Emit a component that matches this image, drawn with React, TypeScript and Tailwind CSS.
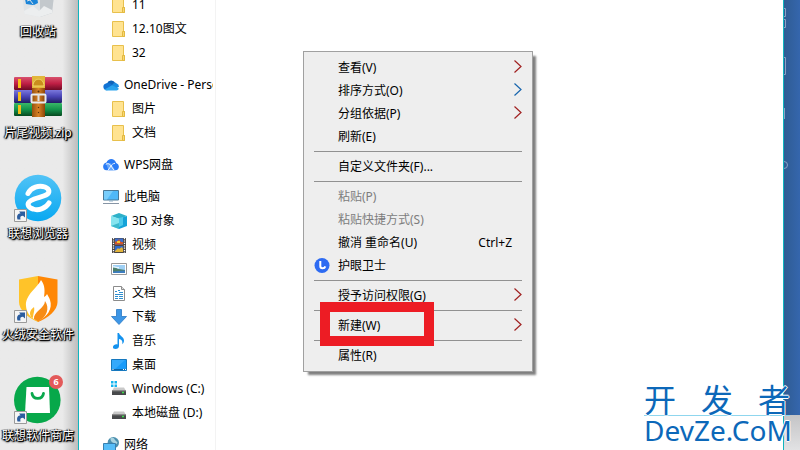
import type { ReactNode } from "react";

const shadow =
  "[text-shadow:1px_1px_0_#000,1px_1px_2px_#000,0_1px_2px_#000,1px_0_1px_#000,-1px_0_1px_#000]";

function FolderIcon() {
  return (
    <svg className="h-4 w-4" viewBox="0 0 16 16">
      <path d="M1.500.5h11V10l1 .5V15.500h-12z" fill="#ffe391" stroke="#e8c04c" />
      <path d="M11.500 15.500v-5h2v5z" fill="#f7d774" stroke="#e3b93f" />
    </svg>
  );
}

function OneDriveIcon() {
  return (
    <svg className="h-4 w-4" viewBox="0 0 16 16">
      <path d="M4 6.500A4.500 4.500 0 0 1 12.300 6L9 10z" fill="#0f62b8" />
      <path d="M3.500 13.200A3.400 3.400 0 0 1 3 6.500c1.500-.8 3.500-.5 5 .5l5 5z" fill="#1173d4" />
      <path d="M9 8.500c1-2.600 3-3.300 4.300-2.300A3.600 3.600 0 0 1 16 9.800L12 12z" fill="#1b8ce0" />
      <path d="M1.500 12.500 9 8.300l6.800 3.200c-.2 1-1 1.900-2.300 1.900h-10c-.8 0-1.500-.3-2-.9z" fill="#2aa4ee" />
    </svg>
  );
}

function WpsIcon() {
  return (
    <svg className="h-4 w-4" viewBox="0 0 16 16">
      <path d="M3.500 5.500C5 1 11.500.5 13.200 6c4 1.500 3.300 7.300-.7 7.300h-9C-1 13-1 6.500 3.500 5.500z" fill="#2b7cf6" />
      <path d="M8 6.500 12 13.300H5.500L3 6z" fill="#69a8fb" />
      <path d="M2.800 7.300c3-1.500 4 0 5.200 1.700l3 4.300M5 13.300l3-4.300c1-1.500 2-2.500 4-2.700" stroke="#fff" strokeWidth=".9" fill="none" />
    </svg>
  );
}

function PcIcon() {
  return (
    <svg className="h-4 w-4" viewBox="0 0 16 16">
      <path d="M.5 1.500h15v9.500H.5z" fill="#4fb8f8" stroke="#4a7896" />
      <path d="M1 2h9L4 10.500H1z" fill="#78cdfb" />
      <path d="M6 11.500h4v1H6z" fill="#8fb0c8" />
      <path d="M0 14.500h16" stroke="#8795a5" />
    </svg>
  );
}

function CubeIcon() {
  return (
    <svg className="h-4 w-4" viewBox="0 0 16 16">
      <path d="m0 3 8-3 8 3-8 3z" fill="#2eb1c9" />
      <path d="m0 3 8 2.500V16l-8-3z" fill="#86e4ef" />
      <path d="m16 3-8 2.500V16l8-3z" fill="#14a3d8" />
      <path d="m0 13 8-3v6z" fill="#3db9cd" />
      <path d="m8 5 4-1v8l-4 2z" fill="#4cc9ea" />
    </svg>
  );
}

function VideoIcon() {
  return (
    <svg className="h-4 w-4" viewBox="0 0 16 16">
      <path d="M1 1h14v15H1z" fill="#4a4542" />
      <path d="M4 1.500h8v6H4z" fill="#3a6fd0" />
      <path d="M4 4.500h2L8 2l2 3h2v2.500H4z" fill="#d2552a" />
      <path d="M6 4h3v2H6z" fill="#f3c832" />
      <path d="M4 9h8v6H4z" fill="#2d69cd" />
      <path d="m4 14 3-3 1 1 3-2 1 2v3H4z" fill="#e2b43a" />
      <path d="M2.500 1v15M13.500 1v15" stroke="#fff" strokeWidth="1.300" strokeDasharray="1.200 1.200" />
    </svg>
  );
}

function PictureIcon() {
  return (
    <svg className="h-4 w-4" viewBox="0 0 16 16">
      <path d="M.5 2.500h15v11H.5z" fill="#fff" stroke="#999" />
      <path d="M2 4h12v8H2z" fill="#9fd0f5" />
      <path d="M2 6c3 0 4 2 6 2s4 1 6 1v3H2z" fill="#4e7f6b" />
      <path d="M2 10.500 14 9.500V12H2z" fill="#3d7dbf" />
      <path d="M2 5.500c2-1 4 1 6 .5v1.500c-2 0-3-1-6-1z" fill="#e8f5ff" />
    </svg>
  );
}

function DocIcon() {
  return (
    <svg className="h-4 w-4" viewBox="0 0 16 16">
      <path d="M2.500 1.500h8l3 3v11h-11z" fill="#fff" stroke="#8c8c8c" />
      <path d="M10.500 1.500v3h3" fill="#ddd" stroke="#8c8c8c" />
      <path d="M4 6.500h2M7 5.500h2M8 7.500h4M4 9.500h8M4 11.500h3M8 11.500h4M4 13.500h3M8 13.500h4" stroke="#2f8fd0" />
    </svg>
  );
}

function DownloadIcon() {
  return (
    <svg className="h-4 w-4" viewBox="0 0 16 16">
      <path d="M5.500.5h5v7h5L8 15.500.5 7.500h5z" fill="#3d96e6" stroke="#2878c4" strokeWidth=".8" />
    </svg>
  );
}

function MusicIcon() {
  return (
    <svg className="h-4 w-4" viewBox="0 0 16 16">
      <path d="M6.500 0H8c.5 3 5.500 4 5 8-.2 1.500-.8 2.500-1.800 3.200C12 8 10.500 6.500 8 6v7c0 1.800-1.500 3-3.500 3S1.800 15 2 13.700C2.300 12 4.500 11 6.500 11.500z" fill="#1492ee" />
    </svg>
  );
}

function DesktopIcon() {
  return (
    <svg className="h-4 w-4" viewBox="0 0 16 16">
      <path d="M.5 2.500h15v11H.5z" fill="#189bfa" stroke="#1678be" />
      <path d="M1 3h13L4 12H1z" fill="#35a9fb" />
      <path d="M1 12.500h14" stroke="#0d65a8" />
      <path d="M1.500 12.500h1M12 12.500h1M14 12.500h1" stroke="#fff" />
    </svg>
  );
}

function DriveIcon({ windows }: { windows?: boolean }) {
  return (
    <svg className="h-4 w-4" viewBox="0 0 16 16">
      {windows && (
        <path d="M0 0h2.500v2.500H0zM3.500 0H6v2.500H3.500zM0 3.500h2.500V6H0zM3.500 3.500H6V6H3.500z" fill="#14b4ee" />
      )}
      <path d="M3 6.500h10l2 3.500H1z" fill="#c9c9c9" />
      <path d="M1 9.500h14V14H1z" fill="#48494b" />
      <path d="M1 9.800h14" stroke="#8c8c8c" />
      <path d="M11 11.500h2" stroke="#3de04b" strokeWidth="1.300" />
    </svg>
  );
}

function NetworkIcon() {
  return (
    <svg className="h-4 w-4" viewBox="0 0 16 16">
      <circle cx="10.300" cy="5.700" r="5.700" fill="#4b8fae" />
      <path d="M7.500 1c4-1 4 2 5 2.500l2 2c-1 2-2 2-3 1S7 5 7.500 1z" fill="#a9d3e0" />
      <path d="M.5 6.500h12v7.500H.5z" fill="#56bdf8" stroke="#397fae" />
      <path d="M2 15.500h9" stroke="#7d92a3" />
    </svg>
  );
}

type Node = { label: string; icon: ReactNode; child?: boolean };

const tree: Node[][] = [
  [
    { label: "11", icon: <FolderIcon />, child: true },
    { label: "12.10图文", icon: <FolderIcon />, child: true },
    { label: "32", icon: <FolderIcon />, child: true },
  ],
  [
    { label: "OneDrive - Persona", icon: <OneDriveIcon /> },
    { label: "图片", icon: <FolderIcon />, child: true },
    { label: "文档", icon: <FolderIcon />, child: true },
  ],
  [{ label: "WPS网盘", icon: <WpsIcon /> }],
  [
    { label: "此电脑", icon: <PcIcon /> },
    { label: "3D 对象", icon: <CubeIcon />, child: true },
    { label: "视频", icon: <VideoIcon />, child: true },
    { label: "图片", icon: <PictureIcon />, child: true },
    { label: "文档", icon: <DocIcon />, child: true },
    { label: "下载", icon: <DownloadIcon />, child: true },
    { label: "音乐", icon: <MusicIcon />, child: true },
    { label: "桌面", icon: <DesktopIcon />, child: true },
    { label: "Windows (C:)", icon: <DriveIcon windows />, child: true },
    { label: "本地磁盘 (D:)", icon: <DriveIcon />, child: true },
  ],
  [{ label: "网络", icon: <NetworkIcon /> }],
];

function ShortcutArrow() {
  return (
    <g>
      <path d="M.5 35.500h12v12H.5z" fill="#f5f5f5" stroke="#9a9a9a" />
      <path d="M3.500 45.500c-1.200-4 .5-6 3-6.200L5 37.500h6v6L9 41.700c-2.200 0-3.200 1-2.500 3.800z" fill="#2b5d9f" />
    </g>
  );
}

function RecycleBin() {
  return (
    <svg className="h-12 w-12" viewBox="0 0 48 48">
      <path d="m6 4 32-1 4 3-4 35-12 4-15.500-3z" fill="#dfe3e6" />
      <path d="m26 10 16-4-4 35-12 4z" fill="#c3c8cc" />
      <path d="m10 39 9-5 6 5 5-5 8 4v3l-12 4-15.500-3z" fill="#eceeef" />
      <path d="m11 27 7-2 5 6-4 2-7-1zM19 26l4-1 1 6-4 2z" fill="#1a84d8" />
      <path d="m13 29 3-1 3 4" fill="none" stroke="#dfe3e6" />
    </svg>
  );
}

function ZipIcon() {
  return (
    <svg className="h-12 w-12" viewBox="0 0 48 48">
      <defs>
        <linearGradient id="red" x2="0" y2="1">
          <stop stopColor="#d8526d" />
          <stop offset=".5" stopColor="#c01f45" />
          <stop offset="1" stopColor="#6d0a24" />
        </linearGradient>
        <linearGradient id="blue" x2="0" y2="1">
          <stop stopColor="#7a78dc" />
          <stop offset=".5" stopColor="#4944b4" />
          <stop offset="1" stopColor="#211d62" />
        </linearGradient>
        <linearGradient id="green" x2="0" y2="1">
          <stop stopColor="#39b868" />
          <stop offset=".5" stopColor="#13924a" />
          <stop offset="1" stopColor="#07481f" />
        </linearGradient>
        <linearGradient id="strap">
          <stop stopColor="#94500f" />
          <stop offset=".5" stopColor="#d98225" />
          <stop offset="1" stopColor="#8a4408" />
        </linearGradient>
      </defs>
      <rect y="4" width="48" height="13" rx="1" fill="url(#red)" />
      <rect y="17" width="48" height="13" rx="1" fill="url(#blue)" />
      <rect y="30" width="48" height="13" rx="1" fill="url(#green)" />
      <path d="M4 6h3v9H4zM4 19h3v9H4zM4 32h3v9H4z" fill="#f7be18" />
      <path d="M18 4h13v40H18z" fill="url(#strap)" />
      <path d="M18 3h13v12H18z" fill="#e2b73b" />
      <path d="M19 13c0-9 11-9 11 0z" fill="#c98e1d" stroke="#f2d566" />
      <circle cx="24.500" cy="18.500" r="1" fill="#56300c" />
      <rect x="17.500" y="21.500" width="14" height="8" rx="1" fill="none" stroke="#e8ebee" strokeWidth="2" />
      <path d="M24.500 21v7" stroke="#dce1e6" strokeWidth="2" />
      <circle cx="24.500" cy="34.500" r=".7" fill="#56300c" />
      <circle cx="24.500" cy="39.500" r=".7" fill="#56300c" />
    </svg>
  );
}

function BrowserIcon() {
  return (
    <svg className="h-12 w-12" viewBox="0 0 48 48">
      <defs>
        <linearGradient id="sky" x2="0" y2="1">
          <stop stopColor="#52c3f6" />
          <stop offset="1" stopColor="#08a8f1" />
        </linearGradient>
      </defs>
      <circle cx="24" cy="24" r="23.300" fill="url(#sky)" />
      <path
        d="M14 19.500C17 13 25 11 31 13c5 2 5 6 1 8-4 2-11 3-15 5.500-5 3-3 7 2 8.500 6 2 13-1 16-6"
        fill="none"
        stroke="#fff"
        strokeWidth="5"
        strokeLinecap="round"
      />
      <ShortcutArrow />
    </svg>
  );
}

function ShieldIcon() {
  return (
    <svg className="h-12 w-12" viewBox="0 0 48 48">
      <path d="M5 4.500 24 1v46C14 43 5 35 5 27z" fill="#ffc329" />
      <path d="M24 1l19.500 3.500V27c0 8-9 16-19.500 20z" fill="#ff8705" />
      <path d="M27 5c-3 7-16 15-15 26 .5 6 4 11 8 13l4 2c9-4 15-12 12-21-1-3-2-4-3-6-1 2-2 2-3 3 1-6 1-12-3-17z" fill="#fff" />
      <path d="M31 26c0 7-12 11-11 18l4 2.500C33 42 36 33 31 26z" fill="#f78c16" />
      <path d="M20 32c-4 3-5 6-3 10l2 1c0-4 2-7 1-11z" fill="#ffbd2c" />
      <ShortcutArrow />
    </svg>
  );
}

function StoreIcon() {
  return (
    <svg className="h-12 w-12" viewBox="0 0 48 48">
      <circle cx="23.300" cy="24" r="23.300" fill="#07a84a" />
      <path d="M12.500 11h22.500l1 26H11z" fill="#fff" />
      <path d="M18 17.500c1 6.500 10.500 6.500 11.500 0" fill="none" stroke="#0aa84c" strokeWidth="2.800" strokeLinecap="round" />
      <ShortcutArrow />
    </svg>
  );
}

const shortcuts: { label: string; icon: ReactNode; badge?: number }[] = [
  { label: "回收站", icon: <RecycleBin /> },
  { label: "片尾视频.zip", icon: <ZipIcon /> },
  { label: "联想浏览器", icon: <BrowserIcon /> },
  { label: "火绒安全软件", icon: <ShieldIcon /> },
  { label: "联想软件商店", icon: <StoreIcon />, badge: 6 },
];

function Desktop() {
  return (
    <aside className="w-[78px] shrink-0 bg-linear-to-r from-[#eaeaea] from-80% to-[#bdbdbd]">
      <ul className="-mt-7 w-[76px]">
        {shortcuts.map((s) => (
          <li key={s.label} className="h-[101px]">
            <a href="#" className="flex flex-col items-center">
              <span className="relative">
                {s.icon}
                {s.badge && (
                  <span className="absolute -top-px -right-px flex h-3.5 w-3.5 items-center justify-center rounded-full bg-[#e35a5a] text-[9px] font-bold text-white">
                    {s.badge}
                  </span>
                )}
              </span>
              <span className={`mt-0.5 whitespace-nowrap text-xs leading-5 text-white ${shadow}`}>
                {s.label}
              </span>
            </a>
          </li>
        ))}
      </ul>
    </aside>
  );
}

function NavTree() {
  return (
    <nav className="w-[137px] shrink-0 overflow-hidden border-r border-[#f3f3f3] pr-0.5">
      <div className="-mt-[7px] flex flex-col gap-2 overflow-hidden">
        {tree.map((group, i) => (
          <ul key={i}>
            {group.map((node) => (
              <li key={node.label}>
                <a
                  href="#"
                  className={
                    node.child
                      ? "flex h-6 items-center gap-[5px] whitespace-nowrap pl-8"
                      : "flex h-6 items-center gap-[5px] whitespace-nowrap pl-6"
                  }
                >
                  <span className="shrink-0">{node.icon}</span>
                  {node.label}
                </a>
              </li>
            ))}
          </ul>
        ))}
      </div>
    </nav>
  );
}

type Item = {
  label: string;
  shortcut?: string;
  submenu?: boolean;
  disabled?: boolean;
  marked?: boolean;
  arrow?: string;
  icon?: ReactNode;
};

const menu: Item[][] = [
  [
    { label: "查看(V)", submenu: true, arrow: "#a02020" },
    { label: "排序方式(O)", submenu: true, arrow: "#1765ad" },
    { label: "分组依据(P)", submenu: true, arrow: "#a02020" },
    { label: "刷新(E)" },
  ],
  [{ label: "自定义文件夹(F)..." }],
  [
    { label: "粘贴(P)", disabled: true },
    { label: "粘贴快捷方式(S)", disabled: true },
    { label: "撤消 重命名(U)", shortcut: "Ctrl+Z" },
    {
      label: "护眼卫士",
      icon: (
        <svg className="h-4 w-4" viewBox="0 0 16 16">
          <circle cx="8" cy="7.500" r="7.500" fill="#2d6bf2" />
          <path d="M6.300 3v5c0 3 4.200 3 5 .4" fill="none" stroke="#fff" strokeWidth="2" />
        </svg>
      ),
    },
  ],
  [{ label: "授予访问权限(G)", submenu: true, arrow: "#a02020" }],
  [{ label: "新建(W)", submenu: true, arrow: "#a02020", marked: true }],
  [{ label: "属性(R)" }],
];

function ContextMenu() {
  return (
    <div className="absolute top-[51px] left-[303px] w-[230px] border border-[#a0a0a0] bg-[#eee] py-1 shadow-[4px_4px_2px_-1px_rgba(0,0,0,0.5)]">
      {menu.map((group, i) => (
        <div key={i}>
          {i > 0 && <hr className="mx-2.5 my-[3px] border-[#919191]" />}
          {group.map((item) => (
            <button
              key={item.label}
              disabled={item.disabled}
              className="relative flex h-[23px] w-full items-center pr-2.5 pl-2.5 text-left disabled:text-[#7d7d7d]"
            >
              <span className="w-6 shrink-0">{item.icon}</span>
              <span className="flex-1">{item.label}</span>
              {item.shortcut && <span className="mr-2.5">{item.shortcut}</span>}
              {item.submenu && (
                <svg className="h-[23px] w-2" viewBox="0 0 8 23">
                  <path d="m.5 4.500 6.500 6-6.500 6" fill="none" stroke={item.arrow} strokeWidth="1.200" />
                </svg>
              )}
              {item.marked && (
                <span className="absolute -top-3 left-4 h-11 w-[114px] border-[10px] border-[#ed1c24]" />
              )}
            </button>
          ))}
        </div>
      ))}
    </div>
  );
}

function Watermark() {
  return (
    <div className="absolute right-2.5 bottom-1.5 w-[146px] text-[#0c68b9] [text-shadow:1px_0_0_#fff,-1px_0_0_#fff,0_1px_0_#fff,0_-1px_0_#fff]">
      <div className="flex justify-between border-b border-[#8fd6ee] text-[32px] leading-[30px]">
        <span>开</span>
        <span>发</span>
        <span>者</span>
      </div>
      <div className="text-[28px] leading-7">DevZe.CoM</div>
    </div>
  );
}

function BackgroundWindow() {
  return (
    <div className="flex w-4 shrink-0 flex-col">
      <div className="flex-1 bg-linear-to-r from-[#2f5c93] to-[#3566ad]">
        <svg className="h-[175px] w-4" viewBox="0 0 16 175" fill="none" stroke="#8ba3c6">
          <path d="M0 8.500h1.500v8H0M0 19.500h1.500v8H0M0 57.500h1.500v17H0M.5 108v11M0 161.500a3.500 3.500 0 0 1 0 7" />
        </svg>
      </div>
      <div className="h-[35px] bg-linear-to-b from-[#c4c4c6] to-[#e2e2e4]" />
    </div>
  );
}

export default function App() {
  return (
    <div className="relative flex h-screen overflow-hidden bg-[#eaeaea] font-['Noto_Sans','Noto_Sans_CJK_SC',sans-serif] text-xs text-black">
      <Desktop />
      <main className="flex min-w-0 flex-1 border-x border-[#10b4bf] bg-white">
        <NavTree />
      </main>
      <BackgroundWindow />
      <ContextMenu />
      <Watermark />
    </div>
  );
}
